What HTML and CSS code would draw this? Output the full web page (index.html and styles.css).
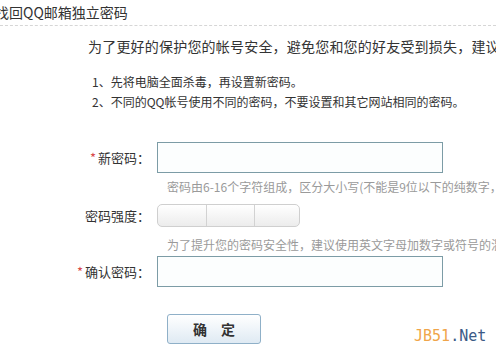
FILE: index.html
```html
<!DOCTYPE html>
<html lang="zh-CN">
<head>
<meta charset="utf-8">
<title>找回QQ邮箱独立密码</title>
<link rel="stylesheet" href="styles.css">
</head>
<body>
<div class="page">
  <h1 class="title">找回QQ邮箱独立密码</h1>
  <div class="content">
    <p class="intro">为了更好的保护您的帐号安全，避免您和您的好友受到损失，建议您：</p>
    <ul class="tips">
      <li>1、先将电脑全面杀毒，再设置新密码。</li>
      <li>2、不同的QQ帐号使用不同的密码，不要设置和其它网站相同的密码。</li>
    </ul>
    <form class="form">
      <div class="row row-input">
        <label class="label"><span class="req">*</span>新密码：</label>
        <input class="field" type="password">
      </div>
      <p class="hint hint-first">密码由6-16个字符组成，区分大小写(不能是9位以下的纯数字，不能包含空格)</p>
      <div class="row row-meter">
        <span class="label">密码强度：</span>
        <div class="meter"><span class="seg seg-first"></span><span class="seg"></span><span class="seg"></span></div>
      </div>
      <p class="hint hint-second">为了提升您的密码安全性，建议使用英文字母加数字或符号的混合密码。</p>
      <div class="row row-input row-confirm">
        <label class="label"><span class="req">*</span>确认密码：</label>
        <input class="field" type="password">
      </div>
      <div class="actions">
        <button class="btn" type="button">确　定</button>
      </div>
    </form>
  </div>
  <div class="watermark"><span class="wm-a">JB51</span><span class="wm-b">.Net</span></div>
</div>
</body>
</html>
```

FILE: styles.css
```css
html, body {
  margin: 0;
  padding: 0;
  background: #fff;
}
body {
  font-family: "Noto Sans CJK SC", "Liberation Sans", sans-serif;
  color: #333;
  overflow: hidden;
  width: 496px;
  height: 351px;
}
.page {
  position: relative;
  width: 496px;
  height: 351px;
  overflow: hidden;
}
.title {
  margin: 0 0 0 -5px;
  font-size: 14px;
  font-weight: normal;
  line-height: 25px;
  height: 25px;
  color: #333;
  border-bottom: 1px dashed #d6d6d6;
  white-space: nowrap;
}
.content {
  white-space: nowrap;
}
.intro {
  margin: 10px 0 0 88px;
  font-size: 14px;
  letter-spacing: 0.2px;
  line-height: 20px;
  color: #333;
}
.tips {
  list-style: none;
  margin: 16px 0 0 92px;
  padding: 0;
  font-size: 12px;
  line-height: 20px;
  color: #333;
}
.form {
  margin: 30px 0 0 0;
}
.row {
  display: grid;
  grid-template-columns: 157px auto;
  align-items: center;
}
.label {
  justify-self: end;
  padding-right: 7px;
  font-size: 13px;
  color: #333;
}
.req {
  color: #d84a4a;
  margin-right: 2px;
}
.field {
  box-sizing: border-box;
  width: 286px;
  height: 31px;
  margin: 0;
  border: 1px solid #7c9ca6;
  background: #fcfefe;
  padding: 0 4px;
  outline: none;
}
.hint {
  margin: 0 0 0 167px;
  font-size: 12px;
  line-height: 18px;
  color: #9a9a9a;
}
.hint-first {
  margin-top: 5px;
}
.row-meter {
  margin-top: 8px;
}
.meter {
  display: flex;
  box-sizing: border-box;
  width: 143px;
  height: 23px;
  border: 1px solid #cfcfcf;
  border-radius: 5px;
  overflow: hidden;
  background: linear-gradient(#ffffff, #ececec);
}
.seg {
  flex: 0 0 47px;
  border-left: 1px solid #d2d2d2;
}
.seg-first {
  flex: 0 0 48px;
  border-left: 0;
}
.hint-second {
  margin-top: 9px;
}
.row-confirm {
  margin-top: 2px;
}
.actions {
  margin: 27px 0 0 167px;
}
.btn {
  box-sizing: border-box;
  width: 94px;
  height: 30px;
  border: 1px solid #8fb0c8;
  border-radius: 3px;
  background: linear-gradient(#ffffff, #dfeaf3);
  font-family: "Noto Sans CJK SC", sans-serif;
  font-size: 14px;
  font-weight: bold;
  color: #333;
  padding: 0;
  cursor: pointer;
}
.watermark {
  position: absolute;
  left: 414px;
  top: 326px;
  font-family: "DejaVu Sans Mono", monospace;
  font-size: 15px;
  line-height: 20px;
}
.wm-a {
  color: #f0a54a;
}
.wm-b {
  color: #3b5a86;
}
```
